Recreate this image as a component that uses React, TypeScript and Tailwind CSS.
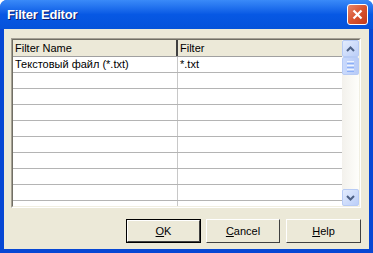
import React from "react";

const rows = [
  ["Текстовый файл (*.txt)", "*.txt"],
  ["", ""],
  ["", ""],
  ["", ""],
  ["", ""],
  ["", ""],
  ["", ""],
  ["", ""],
  ["", ""],
  ["", ""],
];

function Chevron({ down }: { down?: boolean }) {
  return (
    <svg width="9" height="6" viewBox="0 0 9 6">
      <path
        d={down ? "M1 1 L4.5 4.5 L8 1" : "M1 5 L4.5 1.5 L8 5"}
        fill="none"
        stroke="#4D6185"
        strokeWidth="2"
      />
    </svg>
  );
}

function Btn({ label, u, def, w }: { label: string; u: string; def?: boolean; w: string }) {
  const rest = label.slice(1);
  return (
    <div className={`h-[24px] ${w} ${def ? "border border-black" : ""}`}>
      <div className="w-full h-full border-t border-l border-white border-b border-r border-b-[#404040] border-r-[#404040] bg-[#ECE9D8] flex items-center justify-center text-[11px] text-black">
        <span>
          <span className="underline">{u}</span>
          {rest}
        </span>
      </div>
    </div>
  );
}

export default function App() {
  return (
    <div
      className="w-[373px] h-[253px] flex flex-col bg-[#0A54E4] rounded-t-[7px] overflow-hidden"
      style={{ fontFamily: '"Liberation Sans", Arial, sans-serif' }}
    >
      <div className="h-[29px] flex items-center justify-between pl-[7px] pr-[5px] bg-gradient-to-b from-[#3A8AF8] via-[#0758E4] to-[#0552DA]">
        <span className="text-white font-bold text-[13px] tracking-[-0.2px] [text-shadow:1px_1px_0_#0A1C6E]">
          Filter Editor
        </span>
        <div className="w-[21px] h-[21px] rounded-[3px] border border-white bg-gradient-to-br from-[#E8866A] via-[#D8532F] to-[#C23A1A] flex items-center justify-center">
          <svg width="11" height="11" viewBox="0 0 11 11">
            <path d="M1.5 1.5 L9.5 9.5 M9.5 1.5 L1.5 9.5" stroke="white" strokeWidth="2.2" />
          </svg>
        </div>
      </div>
      <div className="flex-1 flex px-[4px] pb-[4px] bg-[#0747D4]">
        <div className="flex-1 bg-[#ECE9D8] flex flex-col pt-[9px] pl-[7px] pr-[8px]">
          <div className="w-[350px] h-[170px] border-t border-l border-[#A5A195] border-b border-r border-b-white border-r-white">
            <div className="w-full h-full border-t border-l border-[#716F64] border-b border-r border-b-[#F1EFE2] border-r-[#F1EFE2] flex overflow-hidden bg-white">
              <div className="flex-1 flex flex-col text-[11px] text-black">
                <div className="h-[17px] flex bg-[#ECE9D8] border-b border-[#A0A0A0]">
                  <div className="w-[165px] pl-[2px] leading-[16px] border-r-2 border-r-[#404040]">Filter Name</div>
                  <div className="flex-1 pl-[2px] leading-[16px]">Filter</div>
                </div>
                {rows.map((r, i) => (
                  <div key={i} className="h-[16px] shrink-0 flex border-b border-[#B4B4B4]">
                    <div className="w-[165px] pl-[2px] leading-[15px] border-r border-[#C8C8C8]">{r[0]}</div>
                    <div className="flex-1 pl-[2px] leading-[15px]">{r[1]}</div>
                  </div>
                ))}
              </div>
              <div className="w-[17px] flex flex-col bg-[#F7F6F2]">
                <div className="h-[17px] rounded-[2px] border border-[#B7CBF5] bg-gradient-to-br from-[#E3ECFD] to-[#BBCEF8] flex items-center justify-center">
                  <Chevron />
                </div>
                <div className="h-[18px] rounded-[2px] border border-[#B7CBF5] bg-gradient-to-r from-[#CADAFC] to-[#B8CBF7] flex flex-col items-center justify-center gap-[1px]">
                  <div className="w-[7px] h-[1px] bg-[#EEF4FE]" />
                  <div className="w-[7px] h-[1px] bg-[#8CB0F8]" />
                  <div className="w-[7px] h-[1px] bg-[#EEF4FE]" />
                  <div className="w-[7px] h-[1px] bg-[#8CB0F8]" />
                  <div className="w-[7px] h-[1px] bg-[#EEF4FE]" />
                  <div className="w-[7px] h-[1px] bg-[#8CB0F8]" />
                </div>
                <div className="flex-1 bg-gradient-to-r from-[#F3F1EC] to-[#FEFEFB]" />
                <div className="h-[17px] rounded-[2px] border border-[#B7CBF5] bg-gradient-to-br from-[#E3ECFD] to-[#BBCEF8] flex items-center justify-center">
                  <Chevron down />
                </div>
              </div>
            </div>
          </div>
          <div className="flex justify-end mt-[11px]">
            <Btn label="OK" u="O" def w="w-[75px]" />
            <div className="w-[5px]" />
            <Btn label="Cancel" u="C" w="w-[74px]" />
            <div className="w-[6px]" />
            <Btn label="Help" u="H" w="w-[75px]" />
          </div>
        </div>
      </div>
    </div>
  );
}
